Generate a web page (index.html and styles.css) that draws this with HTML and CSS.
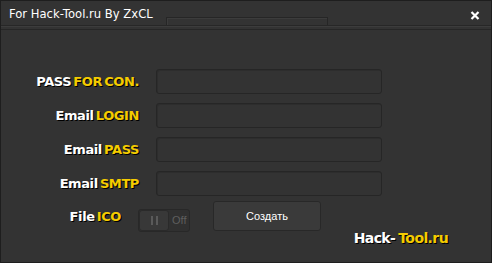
FILE: index.html
```html
<!DOCTYPE html>
<html>
<head>
<meta charset="utf-8">
<link rel="stylesheet" href="styles.css">
</head>
<body>
<div class="window">
  <div class="titlebar">
    <div class="title">For Hack-Tool.ru By ZxCL</div>
    <div class="tab"></div>
    <div class="close">
      <svg width="10" height="9" viewBox="0 0 10 9"><path d="M1.5 1 L8.5 8 M8.5 1 L1.5 8" stroke="#fff" stroke-width="2.2" fill="none"/></svg>
    </div>
  </div>
  <div class="sep"></div>
  <div class="form">
    <div class="row">
      <div class="label"><span class="w">PASS</span> <span class="y">FOR CON.</span></div>
      <div class="input"></div>
    </div>
    <div class="row">
      <div class="label"><span class="w">Email</span> <span class="y">LOGIN</span></div>
      <div class="input"></div>
    </div>
    <div class="row">
      <div class="label"><span class="w">Email</span> <span class="y">PASS</span></div>
      <div class="input"></div>
    </div>
    <div class="row">
      <div class="label"><span class="w">Email</span> <span class="y">SMTP</span></div>
      <div class="input"></div>
    </div>
    <div class="lastrow">
      <div class="label short"><span class="w">File</span> <span class="y">ICO</span></div>
      <div class="toggle">
        <div class="knob"><i></i><i></i></div>
        <span class="off">Off</span>
      </div>
      <div class="button">Создать</div>
    </div>
  </div>
  <div class="footer"><span class="w">Hack-</span> <span class="y">Tool.ru</span></div>
</div>
</body>
</html>
```
FILE: styles.css
```css
html, body {
  margin: 0;
  padding: 0;
  background: #333333;
}
.window {
  width: 492px;
  height: 263px;
  box-sizing: border-box;
  border: 1px solid #1e1e1e;
  background: #333333;
  display: flex;
  flex-direction: column;
  font-family: "DejaVu Sans", sans-serif;
}
.titlebar {
  height: 24px;
  display: flex;
  align-items: flex-start;
  border-bottom: 1px solid #272727;
}
.title {
  color: #ffffff;
  font-size: 11.6px;
  padding-left: 8px;
  padding-top: 6px;
  width: 157px;
  white-space: nowrap;
}
.tab {
  width: 160px;
  height: 7px;
  margin-top: 16px;
  border: 1px solid #262626;
  border-bottom: none;
  box-shadow: inset 1px 1px 0 #3c3c3c;
}
.close {
  margin-left: auto;
  margin-right: 11px;
  margin-top: 10px;
  display: flex;
}
.sep {
  height: 2px;
  border-top: 1px solid #3c3c3c;
  border-bottom: 1px solid #262626;
}
.form {
  display: flex;
  flex-direction: column;
  gap: 9px;
  padding-top: 39px;
}
.row {
  display: flex;
  align-items: center;
  height: 25px;
}
.label {
  width: 138px;
  text-align: right;
  font-weight: bold;
  font-size: 13px;
  white-space: nowrap;
  text-shadow: 1px 1px 0 #000;
  letter-spacing: -0.4px;
  word-spacing: -2px;
}
.w { color: #ffffff; }
.y { color: #f5cc00; }
.input {
  margin-left: 17px;
  width: 224px;
  height: 23px;
  border: 1px solid #262626;
  border-radius: 3px;
  background: #333333;
  box-shadow: inset 1px 1px 0 #2d2d2d;
}
.lastrow {
  display: flex;
  align-items: center;
  height: 30px;
  margin-top: -4px;
}
.label.short {
  width: 120px;
}
.toggle {
  margin-left: 17px;
  margin-top: 8px;
  width: 50px;
  height: 21px;
  border: 1px solid #282828;
  border-radius: 3px;
  background: #303030;
  display: flex;
  align-items: center;
}
.knob {
  width: 28px;
  height: 19px;
  border: 1px solid #2a2a2a;
  border-radius: 3px;
  background: #383838;
  display: flex;
  justify-content: center;
  align-items: center;
  gap: 3px;
}
.knob i {
  width: 2px;
  height: 9px;
  background: #5a5a5a;
}
.off {
  font-family: "Liberation Sans", sans-serif;
  font-size: 11px;
  color: #5e5e5e;
  margin-left: 3px;
}
.button {
  margin-left: 23px;
  width: 106px;
  height: 28px;
  border: 1px solid #282828;
  border-radius: 3px;
  background: #3a3a3a;
  color: #ffffff;
  font-family: "Liberation Sans", sans-serif;
  font-size: 11px;
  display: flex;
  align-items: center;
  justify-content: center;
}
.footer {
  display: flex;
  justify-content: flex-end;
  gap: 3px;
  padding-right: 43px;
  margin-top: -1px;
  font-weight: bold;
  font-size: 14px;
  text-shadow: 1px 1px 0 #000;
  letter-spacing: -0.6px;
}
```
